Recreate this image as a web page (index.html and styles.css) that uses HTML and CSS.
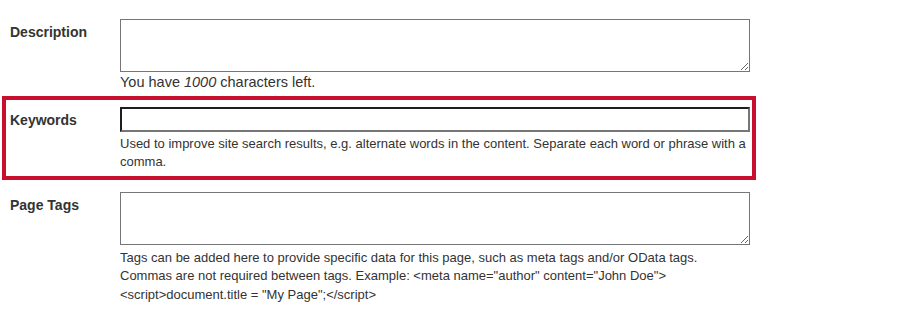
FILE: index.html
```html
<!DOCTYPE html>
<html>
<head>
<meta charset="utf-8">
<link rel="stylesheet" href="styles.css">
</head>
<body>
<div class="form">
  <div class="row">
    <label class="label">Description</label>
    <div class="field">
      <textarea class="textarea"></textarea>
      <div class="help help-count">You have <em>1000</em> characters left.</div>
    </div>
  </div>
  <div class="row highlight">
    <label class="label">Keywords</label>
    <div class="field">
      <input class="input" type="text">
      <div class="help">Used to improve site search results, e.g. alternate words in the content. Separate each word or phrase with a comma.</div>
    </div>
  </div>
  <div class="row tags">
    <label class="label">Page Tags</label>
    <div class="field">
      <textarea class="textarea"></textarea>
      <div class="help">Tags can be added here to provide specific data for this page, such as meta tags and/or OData tags.<br>Commas are not required between tags. Example: &lt;meta name="author" content="John Doe"&gt;<br>&lt;script&gt;document.title = "My Page";&lt;/script&gt;</div>
    </div>
  </div>
</div>
</body>
</html>
```
FILE: styles.css
```css
html, body {
  margin: 0;
  padding: 0;
  background: #fff;
}
body {
  font-family: "Liberation Sans", Arial, sans-serif;
  font-size: 14px;
  color: #333;
}
.form {
  padding-top: 19px;
}
.row {
  display: grid;
  grid-template-columns: 110px 630px;
  padding-left: 10px;
  width: 740px;
}
.label {
  font-weight: bold;
  padding-top: 5px;
  line-height: 16px;
}
.field {
  display: flex;
  flex-direction: column;
}
.textarea {
  display: block;
  box-sizing: border-box;
  width: 630px;
  height: 53px;
  margin: 0;
  border: 1px solid #767676;
  border-radius: 0;
  resize: vertical;
  font-family: inherit;
  font-size: 14px;
}
.input {
  display: block;
  box-sizing: border-box;
  width: 630px;
  height: 25px;
  margin: 0;
  padding: 0 4px;
  border-width: 2px;
  border-style: solid;
  border-color: #1e1e1e #767676 #767676 #1e1e1e;
  border-radius: 0;
  outline: none;
  font-family: inherit;
  font-size: 14px;
}
.help {
  font-size: 13px;
  line-height: 18px;
  margin-top: 3px;
  color: #333;
}
.help-count {
  font-size: 14.5px;
  margin-top: 1px;
}
.tags .help {
  line-height: 18.3px;
  margin-top: 4px;
}
.help em {
  font-style: italic;
}
.highlight {
  margin-top: 5px;
  margin-left: 2px;
  border: 4px solid #c8102e;
  padding: 7px 2px 5px 4px;
}
.tags {
  margin-top: 12px;
}
```
